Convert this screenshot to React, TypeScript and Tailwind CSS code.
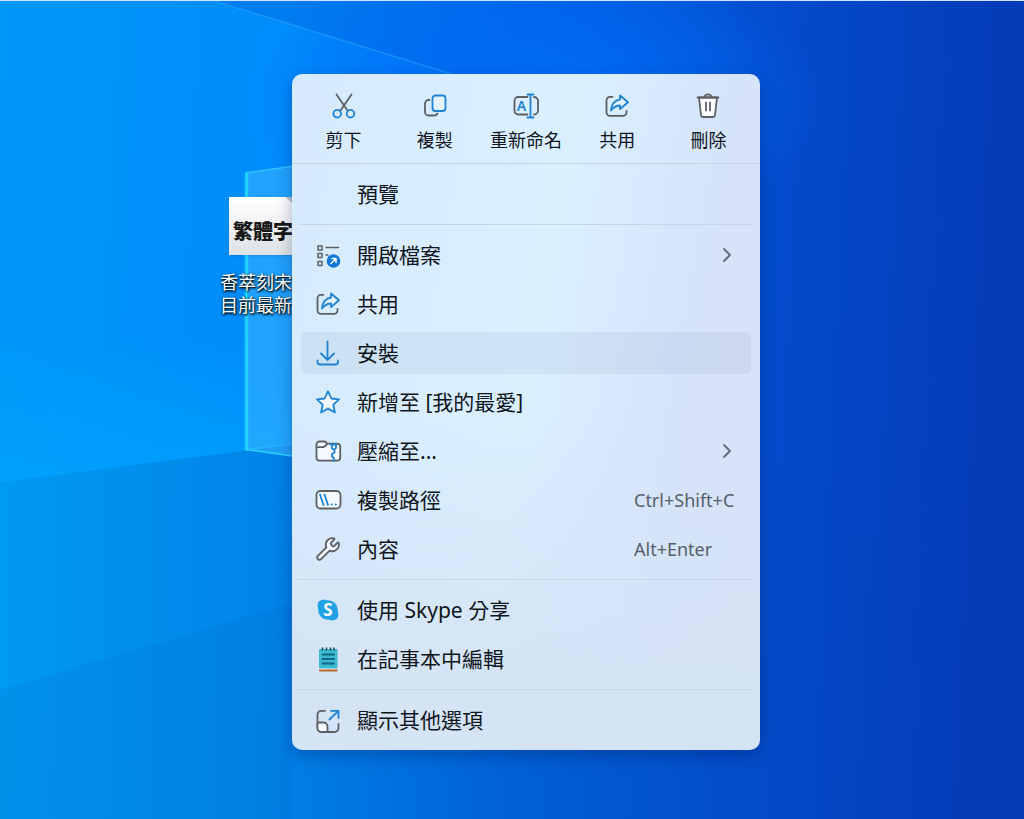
import type { ReactNode } from 'react';
import { ChevronRight, Wrench } from 'lucide-react';

interface MenuItem {
  label: string;
  icon?: ReactNode;
  shortcut?: string;
  submenu?: boolean;
  active?: boolean;
}

const BLUE = '#1e82d2';
const GRAY = '#5c5f64';
const PAPER = '#f4f9ff';

function Icon({ children }: { children: ReactNode }) {
  return (
    <svg
      viewBox="0 0 26 26"
      className="h-[26px] w-[26px] shrink-0 overflow-visible"
      fill="none"
      stroke={GRAY}
      strokeWidth="1.8"
      strokeLinecap="round"
      strokeLinejoin="round"
      aria-hidden="true"
    >
      {children}
    </svg>
  );
}

const CutIcon = () => (
  <Icon>
    <path d="M5.5 1.5 16.5 17.5M20.5 1.5 9.5 17.5" />
    <circle cx="6.2" cy="20.7" r="3.8" stroke={BLUE} />
    <circle cx="19.5" cy="20.7" r="3.8" stroke={BLUE} />
  </Icon>
);

const CopyIcon = () => (
  <Icon>
    <path d="M7.5 7H6.5a3.5 3.5 0 0 0-3.5 3.5v8.5a3.5 3.5 0 0 0 3.5 3.5h6a3.5 3.5 0 0 0 3-2" />
    <rect x="10.5" y="2.5" width="13" height="15.5" rx="3" stroke={BLUE} fill="#e3f2ff" />
  </Icon>
);

const RenameIcon = () => (
  <Icon>
    <path d="M14.5 4H5a3.5 3.5 0 0 0-3.5 3.5V18a3.5 3.5 0 0 0 3.5 3.5h9.5M21 4a4 4 0 0 1 4 4v9.5a4 4 0 0 1-4 4" />
    <path d="M17.5 1.5v23M14.5 1.5h6M14.5 24.5h6" stroke={BLUE} />
    <text x="8.5" y="18" textAnchor="middle" fill={BLUE} stroke="none" fontSize="14" fontWeight="600" fontFamily="Noto Sans, sans-serif">A</text>
  </Icon>
);

const ShareIcon = () => (
  <Icon>
    <path d="M8.5 3.8H6a3.5 3.5 0 0 0-3.5 3.5v12a3.5 3.5 0 0 0 3.5 3.5h13a3.5 3.5 0 0 0 3.5-3.5V18" />
    <path d="M16 2.5 24 9.3 16 16V12.5C11.8 12.5 9.5 14.3 7 17.5 7.3 11.5 10.8 7 16 6.5Z" stroke={BLUE} fill="#e3f2ff" />
  </Icon>
);

const DeleteIcon = () => (
  <Icon>
    <path d="M4 4.5 6 22a2.2 2.2 0 0 0 2.2 2h9.6a2.2 2.2 0 0 0 2.2-2L22 4.5Z" fill="#fff" />
    <path d="M2.5 4.5h21M9.5 4.3a3.5 3 0 0 1 7 0M11 9.5v8M15 9.5v8" />
  </Icon>
);

const OpenIcon = () => (
  <Icon>
    <path d="M3 4h4v4H3zM3 11.5h4v4H3zM3 19.5h4v4H3zM11 5.5h12.5M11 13h2" strokeWidth="1.5" />
    <circle cx="18.5" cy="19" r="6.8" fill="#1378d6" stroke="none" />
    <path d="m16 21.5 5-5m-4 0h4v4" stroke="#fff" strokeWidth="1.4" />
  </Icon>
);

const InstallIcon = () => (
  <Icon>
    <path d="M12.5 1.5V20M6 13.5l6.5 6.5 6.5-6.5M2.5 20.5V22A2.5 2.5 0 0 0 5 24.5h15.5A2.5 2.5 0 0 0 23 22v-1.5" stroke={BLUE} />
  </Icon>
);

const FavoriteIcon = () => (
  <Icon>
    <path d="m13 2.2 3.3 7.3 7.9.9-5.9 5.3 1.6 7.8-6.9-3.9-6.9 3.9 1.6-7.8-5.9-5.3 7.9-.9Z" stroke={BLUE} fill={PAPER} />
  </Icon>
);

const CompressIcon = () => (
  <Icon>
    <path d="M1.5 6.5a3 3 0 0 1 3-3h5A3 3 0 0 1 12 5.7h10a3.2 3.2 0 0 1 3.2 3.2v10.6a3.2 3.2 0 0 1-3.2 3.2H4.7a3.2 3.2 0 0 1-3.2-3.2Z" fill={PAPER} />
    <path d="M1.5 9.2H7c2.5 0 3.5-1 5-3.5" />
    <path d="M15.5 6.5h6M17 7v3.5l2.5 1.5v2.5L17 16v2.5l2 1.5v2.5M21 7v3l-2 1.5" stroke={BLUE} />
  </Icon>
);

const PathIcon = () => (
  <Icon>
    <rect x="1.5" y="4" width="24" height="17.5" rx="4" fill={PAPER} />
    <path d="m5 7.5 3.5 10.5M9.5 7.5 13 18" stroke={BLUE} />
    <path d="M16.5 17.5h.1M20.7 17.5h.1" stroke={BLUE} strokeWidth="2" />
  </Icon>
);

const SkypeIcon = () => (
  <Icon>
    <g fill="#21a1e6" stroke="none">
      <circle cx="13" cy="13" r="9.8" />
      <circle cx="8.5" cy="8.5" r="6" />
      <circle cx="17.5" cy="17.5" r="6" />
    </g>
    <text x="13" y="19" textAnchor="middle" fill="#fff" stroke="none" fontSize="17" fontWeight="700" fontFamily="Noto Sans, sans-serif">S</text>
  </Icon>
);

const NotepadIcon = () => (
  <Icon>
    <rect x="4" y="22" width="18.5" height="3.5" rx="1" fill="#b5672c" stroke="none" />
    <rect x="4" y="21.5" width="18.5" height="2" fill="#f5f1ea" stroke="none" />
    <rect x="4" y="3" width="18.5" height="19.5" rx="1" fill="#3cb9d3" stroke="none" />
    <path d="M7.5 8.5H19M7.5 13H19M7.5 17.5H19" stroke="#11677f" />
    <path d="M7.5 2v2M11.5 2v2M15.5 2v2M19 2v2" stroke="#26505f" strokeWidth="1.6" />
  </Icon>
);

const MoreIcon = () => (
  <Icon>
    <path d="M10 3.8H6.500a4 4 0 0 0-4 4V21a4 4 0 0 0 4 4h13a4 4 0 0 0 4-4v-4" />
    <path d="M2.5 15.5h6a4 4 0 0 1 4 4V25h-6a4 4 0 0 1-4-4Z" fill={PAPER} />
    <path d="m14.5 12.5 9-8.7M16 3.8h7.5V11" stroke={BLUE} />
  </Icon>
);

const ACTIONS = [
  { label: '剪下', icon: <CutIcon /> },
  { label: '複製', icon: <CopyIcon /> },
  { label: '重新命名', icon: <RenameIcon /> },
  { label: '共用', icon: <ShareIcon /> },
  { label: '刪除', icon: <DeleteIcon /> },
];

const GROUPS: MenuItem[][] = [
  [{ label: '預覽' }],
  [
    { label: '開啟檔案', icon: <OpenIcon />, submenu: true },
    { label: '共用', icon: <ShareIcon /> },
    { label: '安裝', icon: <InstallIcon />, active: true },
    { label: '新增至 [我的最愛]', icon: <FavoriteIcon /> },
    { label: '壓縮至...', icon: <CompressIcon />, submenu: true },
    { label: '複製路徑', icon: <PathIcon />, shortcut: 'Ctrl+Shift+C' },
    { label: '內容', icon: <Wrench size={26} strokeWidth={1.7} color={GRAY} fill={PAPER} />, shortcut: 'Alt+Enter' },
  ],
  [
    { label: '使用 Skype 分享', icon: <SkypeIcon /> },
    { label: '在記事本中編輯', icon: <NotepadIcon /> },
  ],
  [{ label: '顯示其他選項', icon: <MoreIcon /> }],
];

function MenuRow({ item }: { item: MenuItem }) {
  return (
    <button
      type="button"
      role="menuitem"
      className={`flex h-[42px] w-full items-center gap-4 rounded-md pl-[14px] text-left ${item.active ? 'bg-[#405870]/7' : 'hover:bg-[#405870]/7'}`}
    >
      <span className="w-[26px] shrink-0">{item.icon}</span>
      <span className="flex-1 whitespace-nowrap text-[21px] leading-6">{item.label}</span>
      {item.submenu && <ChevronRight className="mr-3 h-6 w-6 text-[#606a78]" strokeWidth={1.8} />}
      {item.shortcut && <span className="w-[117px] text-[18px] leading-6 text-[#565f6b]">{item.shortcut}</span>}
    </button>
  );
}

function Wallpaper() {
  return (
    <svg viewBox="0 0 1024 819" preserveAspectRatio="none" className="absolute inset-0 h-full w-full" aria-hidden="true">
      <defs>
        <linearGradient id="sky" x1="0" y1="0" x2="1" y2="0.04">
          <stop offset="0" stopColor="#0098f8" />
          <stop offset="0.28" stopColor="#008cfb" />
          <stop offset="0.5" stopColor="#0068ec" />
          <stop offset="0.74" stopColor="#034ed0" />
          <stop offset="0.87" stopColor="#0444c2" />
          <stop offset="1" stopColor="#053bb6" />
        </linearGradient>
        <linearGradient id="floor" x1="0" y1="0" x2="1" y2="0">
          <stop offset="0" stopColor="#00a0e0" stopOpacity="0.3" />
          <stop offset="0.3" stopColor="#0070c0" stopOpacity="0.35" />
          <stop offset="0.55" stopColor="#0058b8" stopOpacity="0.4" />
          <stop offset="0.9" stopColor="#0444b8" stopOpacity="0" />
        </linearGradient>
        <linearGradient id="shade" x1="0" y1="0" x2="1" y2="0">
          <stop offset="0" stopColor="#0050d0" stopOpacity="0.3" />
          <stop offset="1" stopColor="#0050d0" stopOpacity="0" />
        </linearGradient>
        <radialGradient id="glow">
          <stop offset="0" stopColor="#0072ff" stopOpacity="0.9" />
          <stop offset="1" stopColor="#0072ff" stopOpacity="0" />
        </radialGradient>
        <linearGradient id="horizon" x1="0" y1="0" x2="0" y2="1">
          <stop offset="0.2" stopColor="#00a8ff" stopOpacity="0" />
          <stop offset="1" stopColor="#00a8ff" stopOpacity="0.6" />
        </linearGradient>
      </defs>
      <rect width="1024" height="819" fill="url(#sky)" />
      <ellipse cx="530" cy="100" rx="290" ry="150" fill="url(#glow)" />
      <path d="M215 0 480 82H760V0Z" fill="url(#shade)" />
      <path d="M215 0 480 82" stroke="#2ba5ff" strokeWidth="1.5" opacity="0.6" />
      <path d="M0 300H292V444L0 482Z" fill="url(#horizon)" />
      <path d="M0 482 292 444 1024 560V819H0Z" fill="url(#floor)" />
      <path d="M0 690 292 603V819H0Z" fill="#0060c0" opacity="0.12" />
      <path d="M246 172 310 163V458L246 449Z" fill="#35b0ff" opacity="0.6" />
      <path d="M246 172 310 163" stroke="#2cc4ff" strokeWidth="1.5" />
      <path d="M246 449 310 458" stroke="#2cd4ff" strokeWidth="1.5" />
      <path d="M246 449 310 441" stroke="#2cc4ff" opacity="0.6" />
      <path d="M246.5 172V450" stroke="#20c4ff" strokeWidth="5" opacity="0.35" />
      <path d="M246.5 172V450" stroke="#26e2ff" strokeWidth="2" />
    </svg>
  );
}

function DesktopFile() {
  return (
    <button type="button" className="absolute left-[220px] top-[196px] flex w-[90px] flex-col items-start text-left">
      <span className="ml-[9px] flex h-[58px] w-[72px] items-center bg-[linear-gradient(222deg,#b9c4ce_10px,transparent_11px),linear-gradient(#fff,#dfe2e5)] pl-1 pt-3 text-[20px] font-black leading-6 text-[#181818] shadow-sm">
        繁體字
      </span>
      <span className="mt-4 whitespace-nowrap text-[18px] leading-[23px] text-white [text-shadow:1px_1px_2px_#000,0_1px_3px_#000]">
        香萃刻宋
        <br />
        目前最新
      </span>
    </button>
  );
}

export default function App() {
  return (
    <main
      lang="zh-Hant"
      className="relative min-h-screen overflow-hidden border-t border-[#cfe4f8] bg-[#0068e0] font-['Noto_Sans','Noto_Sans_CJK_TC',sans-serif]"
    >
      <Wallpaper />
      <DesktopFile />

      {/* Context menu */}
      <div
        role="menu"
        className="absolute left-[292px] top-[73px] w-[468px] rounded-[10px] bg-[linear-gradient(180deg,transparent_50%,#d5e4f5_90%),linear-gradient(100deg,#d6eafc_0%,#daf0ff_50%,#d6e4fa_75%,#d7e1f6_100%)] text-[#10151c] shadow-[0_6px_16px_rgba(0,20,80,0.3)]"
      >
        {/* Quick actions */}
        <div className="grid grid-cols-5 px-[6px] pb-[10px] pt-[19px]">
          {ACTIONS.map(action => (
            <button key={action.label} type="button" role="menuitem" className="flex flex-col items-center gap-2">
              {action.icon}
              <span className="whitespace-nowrap text-[18px] leading-[26px]">{action.label}</span>
            </button>
          ))}
        </div>
        <div className="h-px bg-[#c3d3e4]" />

        {GROUPS.map((group, i) => (
          <div key={group[0].label}>
            {i > 0 && <div className="mx-[6px] h-px bg-[#c6d6e6]" />}
            <div className="flex flex-col gap-[7px] px-[9px] py-[9px]">
              {group.map(item => (
                <MenuRow key={item.label} item={item} />
              ))}
            </div>
          </div>
        ))}
      </div>
    </main>
  );
}
